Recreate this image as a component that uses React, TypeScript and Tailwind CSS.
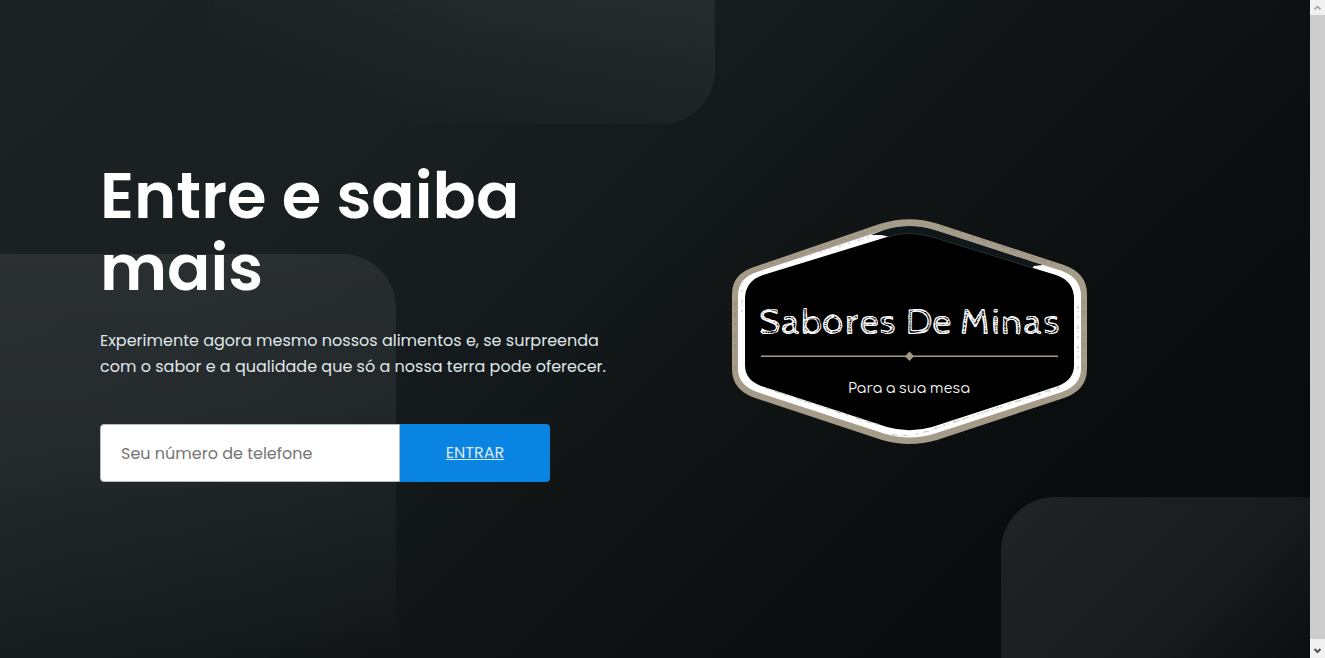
import React from "react";

function Backdrop() {
  return (
    <div className="pointer-events-none absolute inset-0 overflow-hidden bg-[linear-gradient(136deg,#1c2124_0%,#1a1f22_25%,#151a1c_41%,#101415_57%,#0c1011_69%,#080c0d_80%,#070b0c_100%)]">
      <div className="absolute top-[-60px] left-[213px] h-[184px] w-[502px] rounded-br-[54px] bg-[linear-gradient(25deg,rgba(255,255,255,0)_20%,rgba(255,255,255,0.045)_60%,rgba(255,255,255,0.08)_100%)]" />
      <div className="absolute top-[254px] left-[-60px] h-[404px] w-[456px] rounded-tr-[54px] bg-[linear-gradient(180deg,rgba(255,255,255,0.07)_0%,rgba(255,255,255,0.055)_40%,rgba(255,255,255,0.015)_85%,rgba(255,255,255,0)_100%)]" />
      <div className="absolute top-[497px] left-[1001px] h-[200px] w-[360px] rounded-tl-[54px] bg-[linear-gradient(135deg,rgba(255,255,255,0.095)_0%,rgba(255,255,255,0.07)_50%,rgba(255,255,255,0.015)_85%)]" />
    </div>
  );
}

function Badge() {
  return (
    <svg
      className="block h-[230px] w-[360px] shrink-0"
      viewBox="730 217 360 230"
      role="img"
      aria-label="Sabores De Minas"
    >
      <path
        fill="#a49b88"
        d="M732 294Q732 274 754 267L881 223.500Q909.500 215 937 223.500L1064 265Q1087 273 1087 294V369Q1087 390 1064 398L937 440Q909.500 448 882 440L755 398Q732 390 732 369Z"
      />
      <path
        fill="#fff"
        d="M738 296Q738 278 757 272L884 230Q909.500 222 935 230L1062 271Q1081 278 1081 296V369Q1081 385 1062 392L935 433.500Q909.500 441.500 884 433.500L757 392Q738 385 738 369Z"
      />
      <path
        fill="#10171a"
        d="M886 236L881 235L871 235L884 230Q909.500 222 935 230L1043 265L1034 266L1030 271Z"
      />
      <path
        fill="#000"
        d="M745 299Q745 281 763 275L887 237Q909.500 230 932 237L1056 275Q1074 281 1074 299V365Q1074 380 1058 386L932 427Q909.500 433.500 887 427L761 386Q745 380 745 365Z"
      />
      <path fill="none" stroke="#39443f" strokeWidth="0.6" d="M887 237Q909.500 230 932 237L1033 268" />
      <path
        fill="none"
        stroke="#77766f"
        strokeOpacity="0.45"
        strokeWidth="1"
        strokeDasharray="4 2 1 3 6 5 2 9"
        d="M770 264L876 229M940 226L1060 266M1084 300V370M735 302V370M765 388L875 424M1060 387L939 427Q909.500 439 890 434"
      />
      <path
        fill="none"
        stroke="#bbb"
        strokeOpacity="0.5"
        strokeWidth="2"
        strokeDasharray="3 2 1 4 2 8"
        d="M800 258L873 236M1078 306V370M742 280V320M780 393L880 425M1060 388L930 430"
      />
      <text
        x="759"
        y="334"
        textLength="302"
        lengthAdjust="spacingAndGlyphs"
        fontSize="38"
        fontFamily="'Cabin Sketch', 'Noto Sans', sans-serif"
        fontWeight="400"
        fill="#fff"
      >
        Sabores De Minas
      </text>
      <path stroke="#a49b88" strokeWidth="1.4" d="M761 356.300H1058" />
      <path fill="#a49b88" d="M909.500 351.500L914 356.200L909.500 361L905 356.200Z" />
      <text
        x="848"
        y="393"
        textLength="122"
        lengthAdjust="spacingAndGlyphs"
        fontSize="15"
        wordSpacing="-0.9"
        fontFamily="Comfortaa, Quicksand, Lato, sans-serif"
        fill="#f4f4f4"
      >
        Para a sua mesa
      </text>
    </svg>
  );
}

function Scrollbar() {
  return (
    <div className="flex w-[15px] shrink-0 flex-col bg-[#f1f1f1]">
      <div className="flex h-[15px] items-center justify-center">
        <svg className="h-[15px] w-[15px]" viewBox="0 0 15 15" fill="none" stroke="#a3a3a3" strokeWidth="1.7">
          <path d="M4.500 9.500L7.500 6.500L10.500 9.500" />
        </svg>
      </div>
      <div className="flex-1 bg-[#cdcdcd]" />
      <div className="flex h-[19px] items-center justify-center">
        <svg className="h-[19px] w-[15px]" viewBox="0 0 15 19" fill="none" stroke="#505050" strokeWidth="2">
          <path d="M4.500 10L7.500 13L10.500 10" />
        </svg>
      </div>
    </div>
  );
}

export default function App() {
  return (
    <div className="flex h-[658px] w-[1325px] overflow-hidden font-[Poppins,Inter,sans-serif]">
      <main className="relative flex-1">
        <Backdrop />
        <div className="relative flex h-full items-start pl-[100px]">
          <section className="w-[630px] shrink-0 pt-[160px]">
            <h1 className="w-[450px] text-[64px] leading-[72px] font-semibold text-white">
              Entre e saiba mais
            </h1>
            <p className="mt-6 w-[520px] text-base leading-[26px] text-[#dfe6e9]">
              Experimente agora mesmo nossos alimentos e, se surpreenda com o sabor e a qualidade que só a nossa terra pode oferecer.
            </p>
            <form className="mt-[44px] flex h-[58px] w-[450px]" onSubmit={(e) => e.preventDefault()}>
              <input
                type="tel"
                placeholder="Seu número de telefone"
                className="w-[300px] rounded-l-[4px] border border-[#b2bec3] bg-white px-5 pt-0.5 text-base text-[#2d3436] outline-none placeholder:text-[#757575]"
              />
              <button className="w-[150px] rounded-r-[4px] bg-[#0984e3] text-base text-[#dfe6e9] underline">
                ENTRAR
              </button>
            </form>
          </section>
          <div className="pt-[217px]">
            <Badge />
          </div>
        </div>
      </main>
      <Scrollbar />
    </div>
  );
}
